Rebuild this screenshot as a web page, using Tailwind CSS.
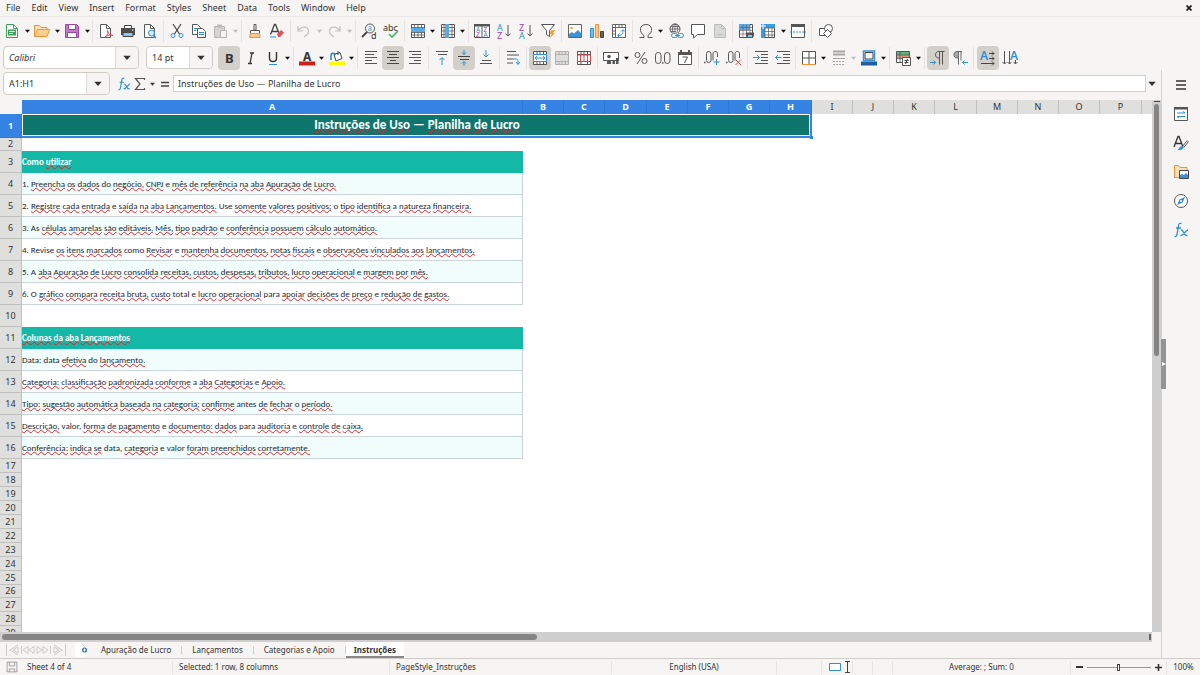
<!DOCTYPE html>
<html lang="en">
<head>
  <meta charset="UTF-8">
  <meta name="viewport" content="width=device-width, initial-scale=1.0">
  <title>Planilha de Lucro</title>
  <script src="https://cdn.jsdelivr.net/npm/@tailwindcss/browser@4"></script>
</head>
<body class="h-screen flex flex-col overflow-hidden bg-[#f6f5f4] text-[#333] text-[9px] leading-3 font-['Noto_Sans',sans-serif]">
  <!-- Icon set -->
  <svg class="hidden">
    <symbol id="new" viewBox="0 0 16 16"><path d="M2.500 1.500h7l4 4v9h-11z" fill="#fff" stroke="#3fa35b"/><path d="M9.500 1.500v4h4" fill="none" stroke="#3fa35b"/><path d="M4 6.500h8v6H4z" fill="#3fa35b"/><path d="M5 8.500h6M5 10.500h4" stroke="#fff"/></symbol>
    <symbol id="open" viewBox="0 0 16 16"><path d="M.5 13.500v-11h5l1.500 2h6v2" fill="#fde3bd" stroke="#e8963a"/><path d="M.5 13.500l3-7h12l-2.500 7z" fill="#fbd08e" stroke="#e8963a"/></symbol>
    <symbol id="save" viewBox="0 0 16 16"><path d="M1.500 1.500h11l2 2v11h-13z" fill="#c678c9" stroke="#9b45a5"/><path d="M4.500 1.500h7v5h-7zM3.500 9.500h9v5h-9z" fill="#fff" stroke="#9b45a5"/></symbol>
    <symbol id="export-pdf" viewBox="0 0 16 16"><path d="M2.500 1.500h6l4 4v9h-10z" fill="#fff" stroke="#5a5a5a"/><path d="M8.500 1.500v4h4" fill="none" stroke="#5a5a5a"/><path d="M7 14c3-2 3.500-5 2.500-6.500-1.500 1 2 4.500 5.500 5-2-1-6-.5-8 1.500z" fill="none" stroke="#e0455a"/></symbol>
    <symbol id="print" viewBox="0 0 16 16"><path d="M4.500 5V2.500h7V5" fill="#fff" stroke="#444"/><path d="M1 5h14v7H1z" fill="#4d4d4d"/><path d="M3 9.500h10v4H3z" fill="#8fc6ea" stroke="#444"/><path d="M12 7h1.500" stroke="#fff"/></symbol>
    <symbol id="preview" viewBox="0 0 16 16"><path d="M2.500 1.500h6l4 4v9h-10z" fill="#fff" stroke="#5a5a5a"/><path d="M8.500 1.500v4h4" fill="none" stroke="#5a5a5a"/><circle cx="9.500" cy="10" r="3" fill="#d8ecf9" stroke="#2f8fd3"/><path d="M11.500 12.500l2.500 2.500" stroke="#2f8fd3" stroke-width="1.500"/></symbol>
    <symbol id="cut" viewBox="0 0 16 16"><path d="M4 1l6.500 10M12 1L5.500 11" stroke="#444" stroke-width="1.200"/><circle cx="4" cy="12.500" r="2" fill="none" stroke="#2f8fd3"/><circle cx="12" cy="12.500" r="2" fill="none" stroke="#2f8fd3"/></symbol>
    <symbol id="copy" viewBox="0 0 16 16"><path d="M1.500 1.500h5l3 3v7h-8z" fill="#fff" stroke="#555"/><path d="M6.500 5.500h5l3 3v6h-8z" fill="#fff" stroke="#555"/><path d="M3 5.500h3M3 7.500h2M8 9.500h5M8 11.500h5" stroke="#2f8fd3"/></symbol>
    <symbol id="paste" viewBox="0 0 16 16"><path d="M1.500 3.500h10v11h-10z" fill="#d4d4d2" stroke="#b4b4b2"/><path d="M4 1.500h5v3H4z" fill="#bbb"/><path d="M7.500 7.500h6v7h-6z" fill="#f4f4f4" stroke="#b4b4b2"/></symbol>
    <symbol id="clone-formatting" viewBox="0 0 16 16"><path d="M7 1.500h2V7H7z" fill="#fff" stroke="#555"/><path d="M3.500 7.500h9v3h-9z" fill="#fff" stroke="#555"/><path d="M3.500 10.500h9l.5 4H2.500z" fill="#f9c98a" stroke="#e8963a"/></symbol>
    <symbol id="clear-formatting" viewBox="0 0 16 16"><path d="M1.500 11.500l4-10h1l4 10M3 8.500h6" fill="none" stroke="#444" stroke-width="1.300"/><path d="M1 14h6" stroke="#2f8fd3"/><path d="M8 11l4-4 3 2.500-4 4.500H9z" fill="#e8505c"/></symbol>
    <symbol id="undo" viewBox="0 0 16 16"><path d="M2 3v5h5M2.500 7.500C5 3 12 3 12.500 8c.2 3-2 4.500-4.500 6" fill="none" stroke="#c2c2c0" stroke-width="1.200"/></symbol>
    <symbol id="redo" viewBox="0 0 16 16"><path d="M14 3v5H9M13.500 7.500C11 3 4 3 3.500 8c-.2 3 2 4.500 4.500 6" fill="none" stroke="#c2c2c0" stroke-width="1.200"/></symbol>
    <symbol id="find" viewBox="0 0 16 16"><circle cx="9" cy="5.500" r="4.500" fill="#fff" stroke="#555"/><path d="M6 9l-5 5" stroke="#444" stroke-width="1.800"/><text x="6.500" y="8" font-size="8" fill="#2f8fd3">a</text><text x="10" y="15.500" font-size="9" fill="#333">d</text></symbol>
    <symbol id="spelling" viewBox="0 0 16 16"><text x="0" y="7.500" font-size="9" fill="#333">abc</text><path d="M6 11l3 3 6-6" fill="none" stroke="#3fb56b" stroke-width="1.600"/></symbol>
    <symbol id="row" viewBox="0 0 16 16"><path d="M1.500 1.500h13v13h-13z" fill="#fff" stroke="#555"/><path d="M1.500 4.500h13M1.500 12h13M4.500 1.500v13M8 1.500v13M11.500 1.500v13" stroke="#555" stroke-width=".8"/><path d="M1 5h14v4H1z" fill="#5aaae6"/><path d="M1.500 9.500h13" stroke="#555" stroke-width=".8"/></symbol>
    <symbol id="column" viewBox="0 0 16 16"><path d="M1.500 1.500h13v13h-13z" fill="#fff" stroke="#555"/><path d="M1.500 4.500h13M1.500 8h13M1.500 11.500h13M12 1.500v13M4 1.500v13" stroke="#555" stroke-width=".8"/><path d="M5 1h4v14H5z" fill="#5aaae6"/></symbol>
    <symbol id="sort" viewBox="0 0 16 16"><path d="M.5 1.500h15v13H.5zM8 3v11" fill="#fff" stroke="#555"/><path d="M0 1h16v2.500H0z" fill="#555"/><g font-size="6.500" fill="#2f8fd3"><text x="2" y="8.800">A</text><text x="9.500" y="14">A</text></g><g font-size="6.500" fill="#a93cb0"><text x="2" y="14">Z</text><text x="9.500" y="8.800">Z</text></g></symbol>
    <symbol id="sort-ascending" viewBox="0 0 16 16"><text x="1" y="7.500" font-size="9" fill="#2f8fd3">A</text><text x="1" y="15.500" font-size="9" fill="#a93cb0">Z</text><path d="M12 2v11M9.500 10.500L12 13l2.500-2.500" fill="none" stroke="#555"/></symbol>
    <symbol id="sort-descending" viewBox="0 0 16 16"><text x="1" y="7.500" font-size="9" fill="#a93cb0">Z</text><text x="1" y="15.500" font-size="9" fill="#2f8fd3">A</text><path d="M12 2v11M9.500 10.500L12 13l2.500-2.500" fill="none" stroke="#555"/></symbol>
    <symbol id="autofilter" viewBox="0 0 16 16"><path d="M1.500 1.500h13l-5 6v6l-3-2v-4z" fill="#fff" stroke="#555"/><path d="M11 7h4l-2 3h2l-5 5 1.500-4H9.500z" fill="#f5a33c"/></symbol>
    <symbol id="image" viewBox="0 0 16 16"><path d="M1.500 1.500h13v13h-13z" fill="#fff" stroke="#666"/><circle cx="4.500" cy="5" r="1.300" fill="#f5a33c"/><path d="M2 14v-3l3-2 2 1.500L11 7l3 3v4z" fill="#3c92d4"/></symbol>
    <symbol id="chart" viewBox="0 0 16 16"><path d="M1.500 5.500h3v9h-3z" fill="#7cbcec" stroke="#2f8fd3"/><path d="M6.500 1.500h3v13h-3z" fill="#fbc981" stroke="#e8963a"/><path d="M11.500 8.500h3v6h-3z" fill="#666" stroke="#444"/></symbol>
    <symbol id="pivot-table" viewBox="0 0 16 16"><path d="M1.500 1.500h13v13h-13zM1.500 4.500h13M4.500 1.500v13M8 1.500v3M11 1.500v3M1.500 8h3M1.500 11h3" fill="#fff" stroke="#666"/><path d="M7 12.500c4 0 5-1.500 5-5.500M10 8.500L12 6.500l2 2M8.500 10.500l-2 2 2 2" fill="none" stroke="#2f8fd3"/></symbol>
    <symbol id="special-character" viewBox="0 0 16 16"><path d="M1.500 14.500h4.500v-2C.5 9 1.500 1.500 8 1.500s7.500 7.500 2 11v2h4.500" fill="none" stroke="#555"/></symbol>
    <symbol id="hyperlink" viewBox="0 0 16 16"><circle cx="7" cy="6" r="5" fill="#fff" stroke="#555"/><path d="M2 6h10M7 1v10M3 3.500h8M3 8.500h5" stroke="#555" stroke-width=".8"/><ellipse cx="7" cy="6" rx="2.500" ry="5" fill="none" stroke="#555" stroke-width=".8"/><path d="M3 10h13v5H3z" fill="#f6f5f4"/><rect x="3.500" y="10.500" width="6" height="4" rx="2" fill="none" stroke="#2f8fd3"/><rect x="9.500" y="10.500" width="6" height="4" rx="2" fill="none" stroke="#2f8fd3"/><path d="M7 12.500h5" stroke="#2f8fd3"/></symbol>
    <symbol id="comment" viewBox="0 0 16 16"><path d="M1.500 1.500h13v10h-7l-4 3.500v-3.500h-2z" fill="#fff" stroke="#555"/></symbol>
    <symbol id="headers-footers" viewBox="0 0 16 16"><path d="M2.500 1.500h7l4 4v9h-11z" fill="#dadad8" stroke="#bdbdbb"/><path d="M9.500 1.500v4h4M5 11.500h6" fill="none" stroke="#bdbdbb"/></symbol>
    <symbol id="print-area" viewBox="0 0 16 16"><path d="M1.500 1.500h13v13h-13z" fill="#fff" stroke="#555"/><path d="M1 1h11v6H1z" fill="#5aaae6"/><path d="M1.500 4.500h13M1.500 7.500h13M1.500 11h13M5 1.500v13M8.500 1.500v13M12 1.500v13" stroke="#555" stroke-width=".6"/><path d="M8 9.500h8v4H8z" fill="#555"/><path d="M9.500 11.500h5v3h-5z" fill="#8fc6ea" stroke="#444" stroke-width=".8"/></symbol>
    <symbol id="freeze" viewBox="0 0 16 16"><path d="M1.500 1.500h13v13h-13z" fill="#fff" stroke="#555"/><path d="M1 1h14v4H5v10H1z" fill="#3c9be0"/><path d="M5 5h9.500M5 8.500h9.500M5 12h9.500M5 5v9.500M8.500 5v9.500M12 5v9.500" stroke="#555" stroke-width=".7"/><path d="M0 3h6M3 0v6" stroke="#fff"/></symbol>
    <symbol id="split" viewBox="0 0 16 16"><path d="M1.500 2.500h13v12h-13z" fill="#fff" stroke="#555"/><path d="M1 1h14v3H1z" fill="#555"/><path d="M0 9h16" stroke="#2f8fd3" stroke-dasharray="2 1"/></symbol>
    <symbol id="draw-functions" viewBox="0 0 16 16"><path d="M1.500 5.500h7v7h-7z" fill="#fff" stroke="#555"/><circle cx="10.500" cy="5.500" r="4" fill="#fff" stroke="#555"/><path d="M9.500 6.500l4 4-4 4-4-4z" fill="#fff" stroke="#555"/></symbol>

    <symbol id="bold" viewBox="0 0 16 16"><text x="4" y="13" font-size="13" font-weight="700" fill="#333">B</text></symbol>
    <symbol id="italic" viewBox="0 0 16 16"><path d="M7 3h4M5 13.500h4M9 3L7 13.500" stroke="#333" stroke-width="1.300"/></symbol>
    <symbol id="underline" viewBox="0 0 16 16"><path d="M4.500 2v6.500c0 4 7 4 7 0V2" fill="none" stroke="#333" stroke-width="1.400"/><path d="M4 14.500h8" stroke="#2f8fd3"/></symbol>
    <symbol id="font-color" viewBox="0 0 16 16"><text x="4" y="10.500" font-size="12" font-weight="700" fill="#333">A</text><path d="M0 11.500h16v4H0z" fill="#c9211e"/></symbol>
    <symbol id="highlighting" viewBox="0 0 16 16"><path d="M5 4.500l6-2 2 6-6 2.500z" fill="#fff" stroke="#444"/><path d="M2 10V5c0-2 2-2 5-1" fill="none" stroke="#2f8fd3" stroke-width="1.600"/><path d="M9 1v4" stroke="#444"/><path d="M0 11.500h16v4H0z" fill="#ffff00"/></symbol>
    <symbol id="align-left" viewBox="0 0 16 16"><path d="M2 1.500h12M2 4.500h9M2 7.500h12M2 10.500h7M2 13.500h12" stroke="#555"/></symbol>
    <symbol id="align-center" viewBox="0 0 16 16"><path d="M2 1.500h12M4 4.500h8M2 7.500h12M5 10.500h6M2 13.500h12" stroke="#444"/></symbol>
    <symbol id="align-right" viewBox="0 0 16 16"><path d="M2 1.500h12M5 4.500h9M2 7.500h12M7 10.500h7M2 13.500h12" stroke="#555"/></symbol>
    <symbol id="align-top" viewBox="0 0 16 16"><path d="M2 1.500h12M4 4.500h9" stroke="#555"/><path d="M8 15V8M5.500 10L8 7.500l2.500 2.500" fill="none" stroke="#2f8fd3"/></symbol>
    <symbol id="center-vertically" viewBox="0 0 16 16"><path d="M2 6.500h12M4 9.500h9" stroke="#444"/><path d="M8 0v4.500M6 2.500l2 2 2-2M8 16v-4.500M6 13.500l2-2 2 2" fill="none" stroke="#2f8fd3"/></symbol>
    <symbol id="align-bottom" viewBox="0 0 16 16"><path d="M2 13.500h12M4 10.500h9" stroke="#555"/><path d="M8 0v7M5.500 4.500L8 7l2.500-2.500" fill="none" stroke="#2f8fd3"/></symbol>
    <symbol id="wrap-text" viewBox="0 0 16 16"><path d="M2 1.500h9M2 5h12M2 9h6M2 13h6" stroke="#555"/><path d="M8 9h3c2 0 2 1 2 5M11 12l2 2.500 2-2.500" fill="none" stroke="#2f8fd3"/></symbol>
    <symbol id="merge-center" viewBox="0 0 16 16"><path d="M1.500 1.500h13v13h-13zM1.500 4.500h13M1.500 11.500h13M5 1.500v3M8 1.500v3M11.500 1.500v3M5 11.500v3M8 11.500v3M11.500 11.500v3" fill="#fff" stroke="#555"/><path d="M1.500 4.500h13v7h-13z" fill="#fff" stroke="#2f8fd3"/><path d="M3 8h10M5 6L3 8l2 2M11 6l2 2-2 2" fill="none" stroke="#2f8fd3"/></symbol>
    <symbol id="merge-cells" viewBox="0 0 16 16"><path d="M1.500 1.500h13v13h-13z" fill="#dededc" stroke="#b0b0ae"/><path d="M1.500 4.500h13M1.500 11.500h13M5 1.500v3M8 1.500v3M11.500 1.500v3M5 11.500v3M8 11.500v3M11.500 11.500v3" stroke="#b0b0ae"/></symbol>
    <symbol id="unmerge-cells" viewBox="0 0 16 16"><path d="M1.500 1.500h13v13h-13zM1.500 4.500h13M5 1.500v13M8 1.500v3M11.500 1.500v13" fill="#fff" stroke="#555"/><path d="M1.500 5h13v6.500h-13zM4.500 5v6.500M8 5v6.500M11.500 5v6.500" fill="#fff" stroke="#e0454a"/></symbol>
    <symbol id="currency" viewBox="0 0 16 16"><path d="M.5 2.500h15v8H.5z" fill="#fff" stroke="#555"/><circle cx="6" cy="6.500" r="1.800" fill="#555"/><path d="M4 14v-2c0-2 4-2 4 0v2zM9.500 10h2.500v4H9.500zM13 8h2.500v6H13z" fill="#555"/></symbol>
    <symbol id="percent" viewBox="0 0 16 16"><circle cx="4.500" cy="5" r="2.500" fill="none" stroke="#555"/><circle cx="11.500" cy="11" r="2.500" fill="none" stroke="#555"/><path d="M12 2L4 14" stroke="#555"/></symbol>
    <symbol id="number" viewBox="0 0 16 16"><rect x=".5" y="2.500" width="5.500" height="11" rx="2.700" fill="none" stroke="#555"/><rect x="9.500" y="2.500" width="5.500" height="11" rx="2.700" fill="none" stroke="#555"/><path d="M7 13h1.500" stroke="#555" stroke-width="1.500"/></symbol>
    <symbol id="date" viewBox="0 0 16 16"><path d="M1.500 3.500h13v11h-13z" fill="#fff" stroke="#555"/><path d="M1 2h14v3H1zM3 0h2v4H3zM11 0h2v4h-2z" fill="#555"/><path d="M5.500 7h5L7.500 13" fill="none" stroke="#555"/></symbol>
    <symbol id="add-decimal" viewBox="0 0 16 16"><path d="M0 12.500h1.500" stroke="#555" stroke-width="1.500"/><rect x="2.500" y="1.500" width="4.500" height="11" rx="2.200" fill="none" stroke="#555"/><path d="M13.500 7V3.500c0-2.700-4.500-2.700-4.500 0v7" fill="none" stroke="#555"/><path d="M12.500 9v6M9.500 12h6" stroke="#2f8fd3"/></symbol>
    <symbol id="delete-decimal" viewBox="0 0 16 16"><path d="M0 12.500h1.500" stroke="#555" stroke-width="1.500"/><rect x="2.500" y="1.500" width="4.500" height="11" rx="2.200" fill="none" stroke="#555"/><path d="M13.500 8V3.500c0-2.700-4.500-2.700-4.500 0v7" fill="none" stroke="#555"/><path d="M9.500 9.500l5.500 5.500M15 9.500L9.500 15" stroke="#e0454a"/></symbol>
    <symbol id="increase-indent" viewBox="0 0 16 16"><path d="M2 1.500h13M8 4.500h7M8 7.500h7M8 10.500h7M2 13.500h13" stroke="#555"/><path d="M0 7.500h6M4 5l2.500 2.500L4 10" fill="none" stroke="#2f8fd3"/></symbol>
    <symbol id="decrease-indent" viewBox="0 0 16 16"><path d="M2 1.500h13M8 4.500h7M8 7.500h7M8 10.500h7M2 13.500h13" stroke="#555"/><path d="M6.500 7.500h-6M3 5L.5 7.500 3 10" fill="none" stroke="#2f8fd3"/></symbol>
    <symbol id="borders" viewBox="0 0 16 16"><path d="M1.500 14V1.500h13V14M8 2v12M2 8h12" fill="#fff" stroke="#555"/><path d="M1 14.500h14" stroke="#e8963a"/></symbol>
    <symbol id="border-style" viewBox="0 0 16 16"><path d="M2 1.500h12M2 4.500h12" stroke="#a8a8a6" stroke-width="2"/><path d="M2 8.500h12" stroke="#a8a8a6"/><path d="M2 11.500h12M2 14.500h12" stroke="#a8a8a6" stroke-dasharray="2 1"/></symbol>
    <symbol id="border-color" viewBox="0 0 16 16"><path d="M2.500 1h11v9.500h-11z" fill="#fff" stroke="#3c92d4" stroke-width="1.500"/><path d="M4 2.500h8v6.500H4z" fill="#f4f4f4" stroke="#444"/><path d="M0 11.500h16v4H0z" fill="#1e5fa3"/></symbol>
    <symbol id="conditional" viewBox="0 0 16 16"><path d="M1.500 1.500h13v11h-13z" fill="#fff" stroke="#555"/><path d="M2 2h12v3H2z" fill="#5cb87a"/><path d="M2 5h12v3.500H2z" fill="#f0907a"/><path d="M1.500 5h13M1.500 8.500h13M5 1.500v11" stroke="#555" stroke-width=".8"/><path d="M7.500 7.500h8v8h-8z" fill="#fff" stroke="#555"/><path d="M9.500 10.500h4M9.500 12.500h4M12.500 9l-2 5" stroke="#444"/></symbol>
    <symbol id="left-to-right" viewBox="0 0 16 16"><path d="M14.500 1.500H8.500C4.500 1.500 4.500 8 8.500 8h1M9.500 1.500v13M12.500 1.500v13" fill="none" stroke="#555"/><path d="M0 12.500h5.500M3.500 10.500l2 2-2 2" fill="none" stroke="#2f8fd3"/></symbol>
    <symbol id="right-to-left" viewBox="0 0 16 16"><path d="M5 1.500h2V8H5c-4 0-4-6.500 0-6.500z" fill="#a8a8a6"/><path d="M10 1.500H5C1 1.500 1 8 5 8h1M6.500 1.500v13M9 1.500v9" fill="none" stroke="#666"/><path d="M16 12.500h-5.500M12.500 10.500l-2 2 2 2" fill="none" stroke="#2f8fd3"/></symbol>
    <symbol id="text-horizontal" viewBox="0 0 16 16"><text x="0" y="10" font-size="12" font-weight="600" fill="#2f8fd3">A</text><path d="M9 3.500h5M12 1.500l2 2-2 2M9 8.500h5M12 6.500l2 2-2 2M1 13.500h13M12 11.500l2 2-2 2" fill="none" stroke="#444"/></symbol>
    <symbol id="text-vertical" viewBox="0 0 16 16"><text x="8" y="10" font-size="12" font-weight="600" fill="#2f8fd3">A</text><path d="M2.500 1v13M.5 12l2 2 2-2M7.500 1v13M5.500 12l2 2 2-2M13.500 10v4M11.500 12l2 2 2-2" fill="none" stroke="#555"/></symbol>

    <symbol id="function" viewBox="0 0 16 16"><path d="M1.500 14.500c2.500.5 2.500-2 3-5l1-6c.3-2 1.300-2.500 3-2M3 6h5" fill="none" stroke="#2f8fd3" stroke-width="1.300"/><path d="M8 8c3.500-.5 2 6.500 6.500 5.500M15 8c-2.500 0-4 6-7.500 5.500" fill="none" stroke="#2f8fd3" stroke-width="1.300"/></symbol>
    <symbol id="sum" viewBox="0 0 16 16"><path d="M12.500 4V2.500h-9L8 8l-4.500 5.500h9V12" fill="none" stroke="#555" stroke-width="1.200"/></symbol>
    <symbol id="formula" viewBox="0 0 16 16"><path d="M4 6.500h8M4 10h8" stroke="#444" stroke-width="1.500"/></symbol>
    <symbol id="menu" viewBox="0 0 16 16"><path d="M3 4h10M3 8h10M3 12h10" stroke="#333" stroke-width="1.400"/></symbol>
    <symbol id="properties" viewBox="0 0 16 16"><path d="M1.500 1.500h13v13h-13z" fill="#fff" stroke="#555"/><path d="M1 1h14v2.500H1z" fill="#555"/><path d="M4 7h8M10 5.500L12 7M12 10.500H4M6 12l-2-1.500" fill="none" stroke="#2f8fd3"/></symbol>
    <symbol id="styles" viewBox="0 0 16 16"><path d="M1 12L5 1.500h1L10 12M2.500 8.500h6" fill="none" stroke="#333" stroke-width="1.300"/><path d="M15 6l-5 6" stroke="#666" stroke-width="2.500"/><path d="M14.500 6.500l-4 5" stroke="#fff"/><path d="M4 15c2 0 2-4 5-4 3 1 1 5-5 4z" fill="#3c92d4"/></symbol>
    <symbol id="gallery" viewBox="0 0 16 16"><path d="M1.500 13.500v-12h4l1.500 2h7v10z" fill="#fde3bd" stroke="#e8963a"/><path d="M6.500 6.500h9v8h-9z" fill="#fff" stroke="#444"/><path d="M7 14v-3l2-1 2 1 2-2 2 2v3z" fill="#3c92d4"/></symbol>
    <symbol id="navigator" viewBox="0 0 16 16"><circle cx="8" cy="8" r="6.500" fill="#fff" stroke="#555"/><path d="M12 4l-2.500 5.500L4 12l2.500-5.500z" fill="#2f8fd3"/><circle cx="8" cy="8" r="1" fill="#fff"/></symbol>
    <symbol id="disk" viewBox="0 0 16 16"><path d="M1.500 1.500h13v13h-13zM4.500 1.500v5h7v-5M4.500 14.500v-4h7v4" fill="none" stroke="#888"/></symbol>
    <symbol id="arrow" viewBox="0 0 6 4"><path d="M0 .5h6L3 4z" fill="currentColor"/></symbol>
  </svg>

  <!-- Menu bar -->
  <nav class="flex items-center h-[17px] pl-[6px] pr-2 border-b border-[#ebe9e7]">
    <div id="menus" class="flex gap-[11px] flex-1"></div>
    <button aria-label="Close document" class="flex"><svg class="size-[6px]" viewBox="0 0 6 6"><path d="M.5.5l5 5M5.500.5l-5 5" stroke="#222" stroke-width="1.800"/></svg></button>
  </nav>

  <!-- Toolbars -->
  <div id="standard-bar" class="flex items-center h-7" role="toolbar" aria-label="Standard"></div>
  <div class="flex items-center h-[25px]" role="toolbar" aria-label="Formatting">
    <div class="flex items-center gap-[7px] w-[216px] pl-[3px]">
      <div class="flex w-[136px] h-[23px] bg-white border border-[#cfcbc7] rounded">
        <input aria-label="Font name" value="Calibri" class="flex-1 min-w-0 px-[5px] italic outline-none">
        <button aria-label="Font list" class="w-[23px] flex items-center justify-center bg-[#f6f5f4] border-l border-[#dcd9d6] rounded-r"><svg class="w-2 h-[5px]"><use href="#arrow"/></svg></button>
      </div>
      <div class="flex w-[67px] h-[23px] bg-white border border-[#cfcbc7] rounded">
        <input aria-label="Font size" value="14 pt" class="flex-1 min-w-0 px-[5px] outline-none">
        <button aria-label="Size list" class="w-[23px] flex items-center justify-center bg-[#f6f5f4] border-l border-[#dcd9d6] rounded-r"><svg class="w-2 h-[5px]"><use href="#arrow"/></svg></button>
      </div>
    </div>
    <div id="format-bar" class="flex items-center"></div>
  </div>

  <!-- Everything between the toolbars and the status bar -->
  <div class="flex flex-1 min-h-0">
    <main class="flex flex-col flex-1 min-w-0">
      <!-- Formula bar -->
      <div class="flex items-center h-[27px] pl-[3px]">
        <div class="flex w-[107px] h-[23px] bg-white border border-[#cfcbc7] rounded">
          <input aria-label="Name box" value="A1:H1" class="flex-1 min-w-0 px-[5px] outline-none">
          <button aria-label="Named ranges" class="w-[23px] flex items-center justify-center bg-[#f6f5f4] border-l border-[#dcd9d6] rounded-r"><svg class="w-2 h-[5px]"><use href="#arrow"/></svg></button>
        </div>
        <div class="w-[63px] flex items-center gap-px pl-[7px]">
          <button aria-label="Function wizard"><svg class="size-[14px]"><use href="#function"/></svg></button>
          <button aria-label="Sum"><svg class="size-4"><use href="#sum"/></svg></button>
          <button aria-label="Sum options" class="w-2 flex justify-center"><svg class="w-[5px] h-1"><use href="#arrow"/></svg></button>
          <button aria-label="Formula"><svg class="size-4"><use href="#formula"/></svg></button>
        </div>
        <input aria-label="Formula" value="Instruções de Uso — Planilha de Lucro" class="flex-1 h-[17px] px-1 bg-white border border-[#d3d0cd] outline-none">
        <button aria-label="Expand formula bar" class="w-3 flex justify-center"><svg class="w-2 h-[5px]"><use href="#arrow"/></svg></button>
        <div class="w-[3px]"></div>
      </div>

      <!-- Sheet with its scroll bars -->
      <div class="flex flex-1 min-h-0 mt-[3px]">
        <div class="flex-1 min-w-0 overflow-hidden bg-white">
          <table class="table-fixed w-full border-separate border-spacing-0">
            <colgroup id="cols"></colgroup>
            <thead><tr id="column-heads"></tr></thead>
            <tbody id="rows"></tbody>
          </table>
        </div>
        <div class="w-[9px] bg-[#cfcfcf] flex flex-col items-center gap-[2px] pt-px">
          <div class="w-[6px] h-px bg-[#444]"></div>
          <div class="w-[5px] h-[252px] rounded-full bg-[#858585]"></div>
        </div>
      </div>
      <div class="flex items-center h-[10px] mr-[9px] bg-[#cfcfcf] pl-[2px]">
        <div class="w-[46.5%] h-[6px] rounded-full bg-[#858585]"></div>
        <div class="ml-auto mr-px w-[2px] h-[6px] bg-[#666]"></div>
      </div>

      <!-- Sheet tabs -->
      <div class="flex items-stretch h-4 text-[8px]">
        <div class="flex items-center w-[75px] pl-[6px]">
          <svg class="w-[60px] h-3" viewBox="0 0 60 12" fill="none" stroke="#cbc9c6"><path d="M.5 0v12M12 1L4 6l8 5M7 6l5-3v6zM15.500 2v8M22 2.500L17 6l5 3.500zM28 2.500L23 6l5 3.500zM31 2.500L36 6l-5 3.500zM37 2.500L42 6l-5 3.500zM44.500 2v8M48 1l8 5-8 5M53 6l-5-3v6zM59.500 0v12"/></svg>
        </div>
        <button aria-label="Add sheet" class="w-4 flex items-center"><svg class="w-[14px] h-[14px]" viewBox="0 0 14 14"><path d="M0 0h7l3 3v11H0z" fill="#fff"/><path d="M6.500.5l3.500 3.500" stroke="#d0d0ce"/><circle cx="9.500" cy="7" r="2.500" fill="#2d6cb5"/><path d="M8 7h3M9.500 5.500v3" stroke="#fff"/></svg></button>
        <div id="tabs" class="flex items-stretch"></div>
      </div>
    </main>

    <!-- Sidebar -->
    <aside class="relative flex flex-col items-center gap-[13px] w-[39px] pt-[7px] border-l border-[#d5d2cf]">
      <button aria-label="Show sidebar" class="absolute -left-px top-[269px] w-[5px] h-[50px] bg-[#949494] flex items-center justify-center"><svg class="size-1" viewBox="0 0 4 4"><path d="M0 0l4 2-4 2z" fill="#fff"/></svg></button>
      <button aria-label="Sidebar settings"><svg class="size-4"><use href="#menu"/></svg></button>
      <button aria-label="Properties"><svg class="size-4"><use href="#properties"/></svg></button>
      <button aria-label="Styles"><svg class="size-4"><use href="#styles"/></svg></button>
      <button aria-label="Gallery"><svg class="size-4"><use href="#gallery"/></svg></button>
      <button aria-label="Navigator"><svg class="size-4"><use href="#navigator"/></svg></button>
      <button aria-label="Functions"><svg class="size-4"><use href="#function"/></svg></button>
    </aside>
  </div>

  <!-- Status bar -->
  <footer class="grid grid-cols-[22px_151fr_217fr_222fr_165fr_45fr_31px_20px_20px_178fr_96px_33px] items-center h-[17px] text-[8px] border-t border-[#cfccc9] [&>*]:h-[13px] [&>*]:border-r [&>*]:border-[#e6e4e2] [&>*]:whitespace-nowrap">
    <div class="flex items-center pl-[6px] border-r-0!"><svg class="size-3"><use href="#disk"/></svg></div>
    <div class="pl-[5px]">Sheet 4 of 4</div>
    <div class="pl-[6px]">Selected: 1 row, 8 columns</div>
    <div class="pl-[6px]">PageStyle_Instruções</div>
    <div class="text-center">English (USA)</div>
    <div></div>
    <div class="flex items-center gap-1 pl-[7px]">
      <svg class="w-3 h-2" viewBox="0 0 12 8"><path d="M.5.500h11v7H.5z" fill="#fff" stroke="#2f8fd3"/></svg>
      <svg class="w-[5px] h-3" viewBox="0 0 5 12"><path d="M0 .5h5M2.500.500v11M0 11.500h5" stroke="#444"/></svg>
    </div>
    <div></div>
    <div></div>
    <div class="text-center">Average: ; Sum: 0</div>
    <div class="flex items-center justify-center gap-1">
      <button aria-label="Zoom out" class="w-[7px] h-[2px] bg-[#333]"></button>
      <input type="range" aria-label="Zoom" value="50" class="w-16 h-px appearance-none bg-[#999] [&::-webkit-slider-thumb]:appearance-none [&::-webkit-slider-thumb]:w-[3px] [&::-webkit-slider-thumb]:h-[7px] [&::-webkit-slider-thumb]:bg-white [&::-webkit-slider-thumb]:border [&::-webkit-slider-thumb]:border-[#444]">
      <button aria-label="Zoom in"><svg class="size-[7px]" viewBox="0 0 7 7"><path d="M0 3.500h7M3.500 0v7" stroke="#333" stroke-width="1.600"/></svg></button>
    </div>
    <div class="text-center border-r-0!">100%</div>
  </footer>

  <script>
    const menus = ["File", "Edit", "View", "Insert", "Format", "Styles", "Sheet", "Data", "Tools", "Window", "Help"];
    const tabs = ["Apuração de Lucro", "Lançamentos", "Categorias e Apoio", "Instruções"];

    // Toolbar groups: width, then the buttons.
    // "+" adds a drop-down arrow, "-" a disabled one, "*" marks a pressed button.
    const standardBar = [
      ["w-[93px]", "new+ open+ save+"],
      ["w-[71px]", "export-pdf print preview"],
      ["w-[78px]", "cut copy paste-"],
      ["w-[49px]", "clone-formatting clear-formatting"],
      ["w-[65px]", "undo- redo-"],
      ["w-[49px]", "find spelling"],
      ["w-[64px]", "row+ column+"],
      ["w-[93px]", "sort sort-ascending sort-descending autofilter"],
      ["w-[71px]", "image chart pivot-table"],
      ["w-[100px]", "special-character+ hyperlink comment headers-footers"],
      ["w-[79px]", "print-area freeze+ split"],
      ["w-[27px]", "draw-functions"]
    ];
    const formatBar = [
      ["w-[78px]", "bold* italic underline+"],
      ["w-[64px]", "font-color+ highlighting+"],
      ["w-[71px]", "align-left align-center* align-right"],
      ["w-[71px]", "align-top center-vertically* align-bottom"],
      ["w-[27px]", "wrap-text"],
      ["w-[71px]", "merge-center* merge-cells unmerge-cells"],
      ["w-[101px]", "currency+ percent number date"],
      ["w-[49px]", "add-decimal delete-decimal"],
      ["w-[48px]", "increase-indent decrease-indent"],
      ["w-[94px]", "borders+ border-style- border-color+"],
      ["w-[35px]", "conditional+"],
      ["w-[49px]", "left-to-right* right-to-left"],
      ["w-[49px]", "text-horizontal* text-vertical"]
    ];

    function renderBar(id, groups) {
      document.getElementById(id).innerHTML = groups.map(([width, items], i) => {
        const last = i === groups.length - 1;
        const buttons = items.split(" ").map(item => {
          const [, name, mark] = item.match(/^(.*?)([+*-]?)$/);
          const pressed = mark === "*" ? "bg-[#d3cfcb]" : "";
          let html = `<button aria-label="${name}" class="w-[22px] h-6 rounded flex items-center justify-center ${pressed}"><svg class="size-4"><use href="#${name}"/></svg></button>`;
          if (mark === "+" || mark === "-") {
            html += `<button aria-label="${name} options" class="w-2 flex justify-center ${mark === "-" ? "text-[#bbb]" : "text-[#111]"}"><svg class="w-[5px] h-1"><use href="#arrow"/></svg></button>`;
          }
          return html;
        }).join("");
        return `<div class="flex items-center justify-center h-[22px] ${width} ${last ? "" : "border-r border-[#e4e1de]"}">${buttons}</div>`;
      }).join("");
    }

    // Words the English dictionary knows
    const known = ["do", "e", "o", "a", "as", "use", "revise", "data", "valor", "para", "antes", "total", "como", "—"];
    const wavy = "underline decoration-wavy decoration-1 decoration-[#e0242c] [text-underline-offset:0px] [text-decoration-skip-ink:none]";

    function spell(text) {
      return text.split(" ").map(word => {
        const bare = word.replace(/[.,:;]/g, "").toLowerCase();
        return known.includes(bare) || /^\d+$/.test(bare) ? word : `<span class="${wavy}">${word}</span>`;
      }).join(" ");
    }

    const cells = {
      3: "Como utilizar",
      4: "1. Preencha os dados do negócio, CNPJ e mês de referência na aba Apuração de Lucro.",
      5: "2. Registre cada entrada e saída na aba Lançamentos. Use somente valores positivos; o tipo identifica a natureza financeira.",
      6: "3. As células amarelas são editáveis. Mês, tipo padrão e conferência possuem cálculo automático.",
      7: "4. Revise os itens marcados como Revisar e mantenha documentos, notas fiscais e observações vinculados aos lançamentos.",
      8: "5. A aba Apuração de Lucro consolida receitas, custos, despesas, tributos, lucro operacional e margem por mês.",
      9: "6. O gráfico compara receita bruta, custo total e lucro operacional para apoiar decisões de preço e redução de gastos.",
      11: "Colunas da aba Lançamentos",
      12: "Data: data efetiva do lançamento.",
      13: "Categoria: classificação padronizada conforme a aba Categorias e Apoio.",
      14: "Tipo: sugestão automática baseada na categoria; confirme antes de fechar o período.",
      15: "Descrição, valor, forma de pagamento e documento: dados para auditoria e controle de caixa.",
      16: "Conferência: indica se data, categoria e valor foram preenchidos corretamente."
    };

    function rowHeight(n) {
      if (n === 1) return "h-6";
      if (n === 2 || n === 26) return "h-[13px]";
      return n <= 16 ? "h-[22px]" : "h-[14px]";
    }

    function renderSheet() {
      const letters = "ABCDEFGHIJKLMNOP".split("");
      document.getElementById("cols").innerHTML = '<col class="w-[22px]"><col class="w-[501px]">' +
        letters.slice(1).map((l, i) => `<col class="${i % 4 === 2 ? "w-[42px]" : "w-[41px]"}">`).join("") + "<col>";
      document.getElementById("column-heads").innerHTML = '<th class="h-[14px] p-0 bg-[#f6f5f4]"></th>' +
        letters.map(l => `<th class="p-0 border-r ${l <= "H" ? "bg-[#3584e4] border-[#2f78d2] text-white font-bold" : "bg-[#dfdfde] border-[#c0c0be] font-normal"}">${l}</th>`).join("") +
        '<th class="p-0 bg-[#dfdfde]"></th>';

      let html = "";
      for (let n = 1; n <= 29; n++) {
        const head = n === 1 ? "bg-[#3584e4] border-[#2f78d2] text-white font-bold" : "bg-[#dfdfde] border-[#c0c0be] font-normal";
        html += `<tr class="${rowHeight(n)}"><th class="p-0 border-r border-b ${head}">${n}</th>`;
        if (n === 1) {
          html += `<td colspan="8" class="relative p-0 pb-[2px] bg-[#0f766e] text-white text-center font-bold text-[13px] leading-4 font-[Carlito,Lato,sans-serif]">${spell("Instruções de Uso — Planilha de Lucro")}
            <div class="absolute inset-0 border-r-2 border-b-2 border-[#3584e4]"><div class="h-full border border-white"></div></div>
            <div class="absolute -right-px -bottom-px size-[3px] bg-[#3584e4]"></div></td><td colspan="9"></td>`;
        } else if (cells[n]) {
          const title = n === 3 || n === 11;
          const look = title ? "bg-[#14b8a6] border-[#14b8a6] text-white font-bold" : n % 2 ? "bg-white border-[#cbd5d5] text-[#1f2937]" : "bg-[#f0fdfa] border-[#cbd5d5] text-[#1f2937]";
          html += `<td class="p-0 border-r border-b text-[9px] whitespace-nowrap font-[Carlito,Lato,sans-serif] ${look}">${spell(cells[n])}</td><td colspan="16"></td>`;
        } else {
          html += '<td colspan="17" class="p-0"></td>';
        }
        html += "</tr>";
      }
      document.getElementById("rows").innerHTML = html;
    }

    document.getElementById("menus").innerHTML = menus.map(m => `<button>${m}</button>`).join("");
    document.getElementById("tabs").innerHTML = tabs.map((t, i) =>
      `<button class="${i === 3 ? "px-2 pt-[2px] bg-white font-bold border-b-2 border-[#888]" : "px-[10px]"}">${t}</button>`).join('<span class="w-px my-1 bg-[#d0cdca]"></span>');
    renderBar("standard-bar", standardBar);
    renderBar("format-bar", formatBar);
    renderSheet();
  </script>
</body>
</html>
